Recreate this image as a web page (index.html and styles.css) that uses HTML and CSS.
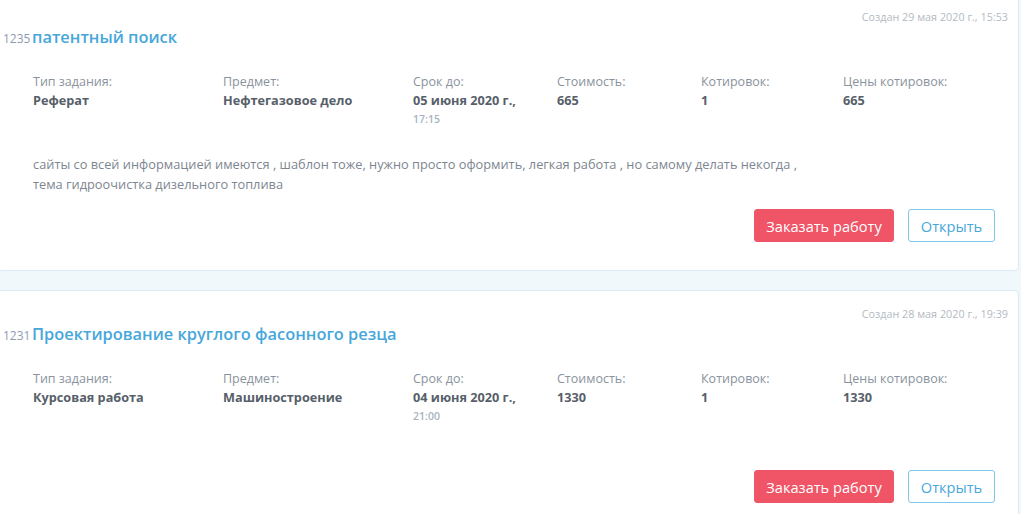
FILE: index.html
```html
<!DOCTYPE html>
<html lang="ru">
<head>
<meta charset="utf-8">
<title>Заказы</title>
<link rel="stylesheet" href="styles.css">
</head>
<body>
<div class="list">
  <div class="card">
    <div class="created">Создан 29 мая 2020 г., 15:53</div>
    <div class="title-row"><span class="num">1235</span><a class="title" href="#">патентный поиск</a></div>
    <div class="fields">
      <div class="field"><div class="label">Тип задания:</div><div class="value">Реферат</div></div>
      <div class="field"><div class="label">Предмет:</div><div class="value">Нефтегазовое дело</div></div>
      <div class="field"><div class="label">Срок до:</div><div class="value">05 июня 2020 г.,</div><div class="time">17:15</div></div>
      <div class="field"><div class="label">Стоимость:</div><div class="value">665</div></div>
      <div class="field"><div class="label">Котировок:</div><div class="value">1</div></div>
      <div class="field"><div class="label">Цены котировок:</div><div class="value">665</div></div>
    </div>
    <p class="desc">сайты со всей информацией имеются , шаблон тоже, нужно просто оформить, легкая работа , но самому делать некогда ,<br>тема гидроочистка дизельного топлива</p>
    <div class="actions"><button class="btn btn-order">Заказать работу</button><button class="btn btn-open">Открыть</button></div>
  </div>
  <div class="card">
    <div class="created">Создан 28 мая 2020 г., 19:39</div>
    <div class="title-row"><span class="num">1231</span><a class="title" href="#">Проектирование круглого фасонного резца</a></div>
    <div class="fields">
      <div class="field"><div class="label">Тип задания:</div><div class="value">Курсовая работа</div></div>
      <div class="field"><div class="label">Предмет:</div><div class="value">Машиностроение</div></div>
      <div class="field"><div class="label">Срок до:</div><div class="value">04 июня 2020 г.,</div><div class="time">21:00</div></div>
      <div class="field"><div class="label">Стоимость:</div><div class="value">1330</div></div>
      <div class="field"><div class="label">Котировок:</div><div class="value">1</div></div>
      <div class="field"><div class="label">Цены котировок:</div><div class="value">1330</div></div>
    </div>
    <p class="desc desc-empty"></p>
    <div class="actions"><button class="btn btn-order">Заказать работу</button><button class="btn btn-open">Открыть</button></div>
  </div>
</div>
</body>
</html>
```
FILE: styles.css
```css
* { box-sizing: border-box; }
html, body { margin: 0; padding: 0; background: #fff; }
body { font-family: "Open Sans", "Noto Sans", sans-serif; overflow: hidden; }
.list {
  width: 1024px;
  margin: -7px 0 0 -3px;
  padding-right: 2px;
  background: #f0f8fc;
  display: flex;
  flex-direction: column;
  gap: 19px;
}
.card {
  background: #fff;
  border: 1px solid #d9ecf6;
  border-radius: 4px;
  padding: 16px 23px 28px 0;
}
.created {
  text-align: right;
  font-size: 10.8px;
  line-height: 14px;
  color: #b3bac2;
  margin-right: -13px;
}
.title-row {
  margin-top: 2px;
  padding-left: 5px;
  display: flex;
  align-items: baseline;
  line-height: 22px;
}
.num { font-size: 12px; color: #8e9bb0; width: 29px; }
.title {
  font-size: 16.4px;
  font-weight: 600;
  color: #47a7da;
  text-decoration: none;
}
.fields {
  margin-top: 23px;
  padding-left: 35px;
  display: grid;
  grid-template-columns: 190px 190px 144px 144px 142px auto;
}
.label { font-size: 12.5px; line-height: 18px; color: #8a939d; }
.value { font-size: 12.7px; line-height: 19px; font-weight: 700; color: #575f6a; }
.time { font-size: 10.5px; line-height: 18px; font-weight: 600; color: #a9b3bd; }
.desc {
  margin: 26px 0 15px;
  padding-left: 35px;
  font-size: 12.8px;
  line-height: 20px;
  color: #7d8690;
}
.desc-empty { margin-top: 45px; }
.actions { display: flex; justify-content: flex-end; gap: 14px; }
.btn {
  font-family: inherit;
  font-size: 14.6px;
  height: 33px;
  border-radius: 3px;
  padding: 0 8px;
  cursor: pointer;
}
.btn-order { background: #ef5566; border: 1px solid #ef5566; color: #fff; width: 140px; }
.btn-open { background: #fff; border: 1px solid #7fc7ea; color: #47a7da; width: 87px; }
```
